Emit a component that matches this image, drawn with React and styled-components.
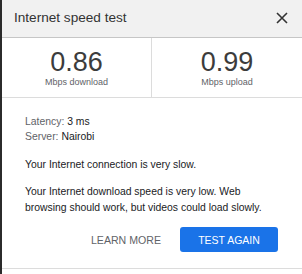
import styled, { createGlobalStyle } from "styled-components";

const GlobalStyle = createGlobalStyle`
  html, body {
    margin: 0;
    padding: 0;
    background: #2b2b2b;
  }
  body {
    font-family: "Liberation Sans", Arial, sans-serif;
  }
`;

const Panel = styled.div`
  margin-left: 2px;
  width: 300px;
  height: 274px;
  background: #fff;
  display: flex;
  flex-direction: column;
  color: #202124;
`;

const Header = styled.div`
  height: 38px;
  flex-shrink: 0;
  box-sizing: border-box;
  display: flex;
  align-items: center;
  justify-content: space-between;
  padding: 0 14px 2px 12px;
  background: #f1f1f1;
  border-bottom: 1px solid #c6c6c6;
`;

const Title = styled.div`
  font-size: 13.6px;
  color: #333;
`;

const CloseButton = styled.button`
  border: none;
  background: none;
  padding: 0;
  width: 12px;
  height: 12px;
  display: flex;
  cursor: pointer;
`;

const Metrics = styled.div`
  display: grid;
  flex-shrink: 0;
  grid-template-columns: 150px 1fr;
  height: 59px;
  border-bottom: 1px solid #dcdcdc;
`;

const Metric = styled.div`
  display: flex;
  flex-direction: column;
  align-items: center;
  padding-top: 9px;
  border-right: ${(p) => (p.$divider ? "1px solid #dcdcdc" : "none")};
`;

const Value = styled.div`
  font-size: 27px;
  line-height: 30px;
  color: #3c3c3c;
`;

const Unit = styled.div`
  font-size: 9px;
  line-height: 11px;
  color: #5f6368;
`;

const Body = styled.div`
  flex-shrink: 0;
  padding: 16px 23px 0 23px;
  font-size: 10.4px;
  line-height: 15px;
`;

const Stat = styled.div`
  color: #202124;
`;

const StatLabel = styled.span`
  color: #5f6368;
`;

const Message = styled.p`
  margin: ${(p) => (p.$first ? "13px" : "11px")} 0 0;
  line-height: 16px;
`;

const Footer = styled.div`
  display: flex;
  flex-shrink: 0;
  align-items: flex-start;
  justify-content: flex-end;
  gap: 19px;
  padding: 11px 24px 0 0;
  height: 53px;
  box-sizing: border-box;
  border-bottom: 1px solid #dcdcdc;
`;

const TextButton = styled.button`
  border: none;
  background: none;
  height: 25px;
  padding: 0;
  font-family: inherit;
  font-size: 10.6px;
  color: #5f6368;
  cursor: pointer;
`;

const PrimaryButton = styled.button`
  border: none;
  border-radius: 3px;
  width: 98px;
  height: 25px;
  background: #1a73e8;
  color: #fff;
  font-family: inherit;
  font-size: 10.5px;
  cursor: pointer;
`;

const CloseIcon = () => (
  <svg width="12" height="12" viewBox="0 0 12 12">
    <path d="M1 1 L11 11 M11 1 L1 11" stroke="#333" strokeWidth="1.6" />
  </svg>
);

const App = () => (
  <>
    <GlobalStyle />
    <Panel>
      <Header>
        <Title>Internet speed test</Title>
        <CloseButton aria-label="Close">
          <CloseIcon />
        </CloseButton>
      </Header>
      <Metrics>
        <Metric $divider>
          <Value>0.86</Value>
          <Unit>Mbps download</Unit>
        </Metric>
        <Metric>
          <Value>0.99</Value>
          <Unit>Mbps upload</Unit>
        </Metric>
      </Metrics>
      <Body>
        <Stat>
          <StatLabel>Latency:</StatLabel> 3 ms
        </Stat>
        <Stat>
          <StatLabel>Server:</StatLabel> Nairobi
        </Stat>
        <Message $first>Your Internet connection is very slow.</Message>
        <Message>
          Your Internet download speed is very low. Web browsing should work,
          but videos could load slowly.
        </Message>
      </Body>
      <Footer>
        <TextButton>LEARN MORE</TextButton>
        <PrimaryButton>TEST AGAIN</PrimaryButton>
      </Footer>
    </Panel>
  </>
);

export default App;
